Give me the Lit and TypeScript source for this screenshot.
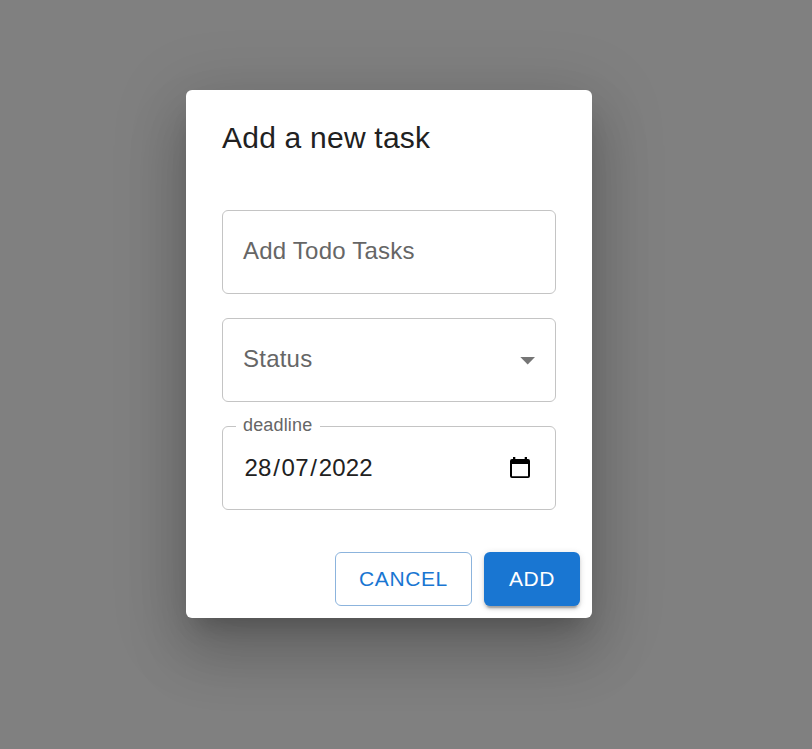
import { LitElement, html, css } from "lit";
import { customElement } from "lit/decorators.js";

@customElement("app-root")
class AppRoot extends LitElement {
  static styles = css`
    :host { display: flex; justify-content: center; align-items: flex-start; box-sizing: border-box; width: 812px; height: 749px; padding: 90px 34px 0 0; overflow: hidden; background: #808080; font-family: "Liberation Sans", Arial, sans-serif; color: #212121; }
    * { box-sizing: border-box; }
    .dialog { width: 406px; height: 528px; background: #fff; border-radius: 6px; display: flex; flex-direction: column; box-shadow: 0 16.5px 22.5px -10.5px rgba(0,0,0,.2), 0 36px 57px 4.5px rgba(0,0,0,.14), 0 13.5px 69px 12px rgba(0,0,0,.12); }
    h2 { margin: 0; height: 96px; padding: 24px 36px; font-weight: 400; font-size: 30px; line-height: 48px; letter-spacing: .225px; white-space: nowrap; }
    .fields { display: flex; flex-direction: column; gap: 24px; padding: 24px 36px 0; }
    .field { position: relative; height: 84px; padding: 0 20px; border: 1px solid #c4c4c4; border-radius: 6px; display: flex; align-items: center; justify-content: space-between; font-size: 24px; letter-spacing: .225px; color: #666; }
    .label { line-height: 34px; padding-bottom: 2px; }
    .legend { position: absolute; left: 13px; top: -14px; padding: 0 8px 0 7px; background: #fff; font-size: 18px; line-height: 24px; letter-spacing: .16px; }
    .date { display: flex; color: #212121; line-height: 34px; }
    .part { padding: 0 1.5px; }
    svg { display: block; }
    .arrow { margin-top: 1px; }
    .calendar { margin-right: 4px; }
    .actions { display: flex; justify-content: flex-end; gap: 12px; padding: 12px; margin-top: auto; }
    button { height: 54px; border-radius: 6px; font: 400 21px "Liberation Sans", Arial, sans-serif; letter-spacing: .6px; padding: 0; }
    .cancel { width: 137px; border: 1px solid #8cb4dd; background: #fff; color: #1976d2; }
    .add { width: 96px; border: 0; background: #1976d2; color: #fff; box-shadow: 0 4.5px 1.5px -3px rgba(0,0,0,.2), 0 3px 3px rgba(0,0,0,.14), 0 1.5px 7.5px rgba(0,0,0,.12); }
  `;
  render() {
    return html`<div class="dialog" role="dialog">
      <h2>Add a new task</h2>
      <div class="fields">
        <div class="field"><span class="label">Add Todo Tasks</span></div>
        <div class="field"><span class="label">Status</span><svg class="arrow" width="15" height="8" viewBox="0 0 15 8"><path d="M.3 0H15L7.700 7.500z" fill="#757575"/></svg></div>
        <div class="field"><label class="legend">deadline</label><span class="date"><span class="part">28</span>/<span class="part">07</span>/<span class="part">2022</span></span><svg class="calendar" width="22" height="24" viewBox="0 0 22 24"><path d="M4 1h2.300v2h9.400V1H18v2h1q2 0 2 2v15q0 2-2 2H3q-2 0-2-2V5q0-2 2-2h1zM3 8V20.200h16V8z" fill="#000" fill-rule="evenodd"/></svg></div>
      </div>
      <div class="actions"><button class="cancel">CANCEL</button><button class="add">ADD</button></div>
    </div>`;
  }
}
